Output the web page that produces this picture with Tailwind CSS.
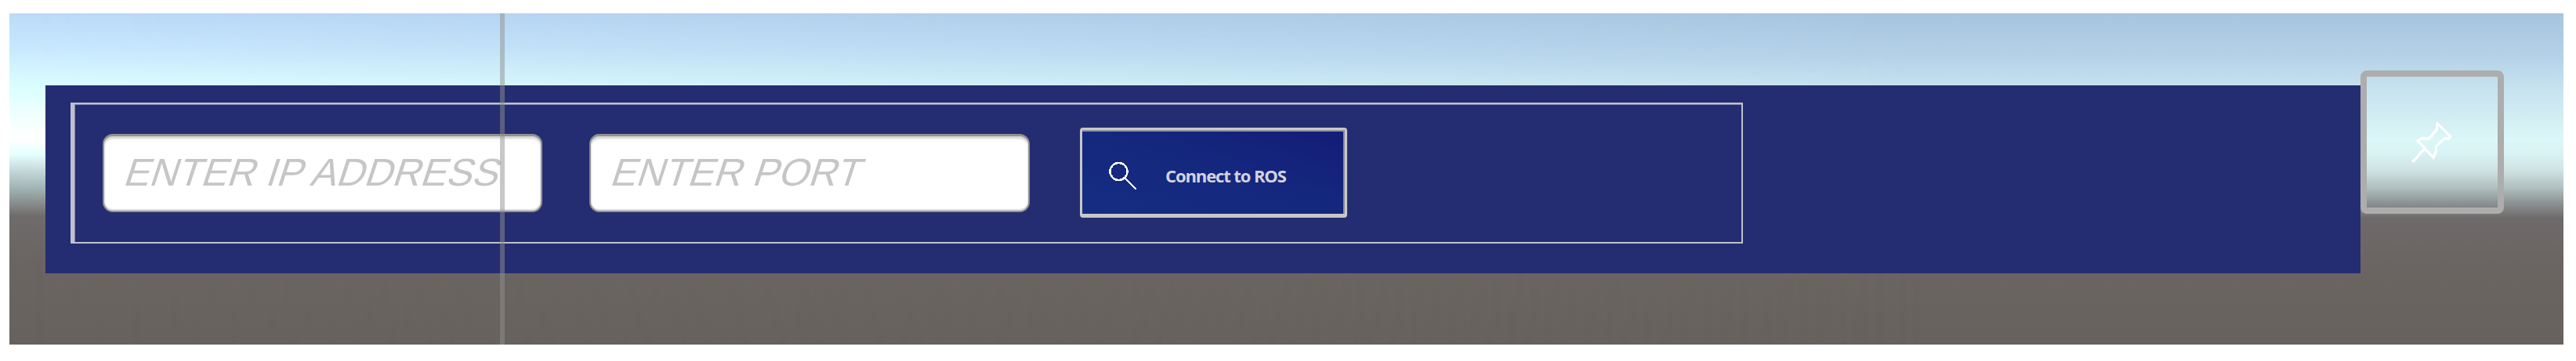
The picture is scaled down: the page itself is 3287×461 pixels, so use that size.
<!DOCTYPE html>
<html lang="en">
<head>
<meta charset="utf-8">
<title>Connect to ROS</title>
<script src="https://cdn.jsdelivr.net/npm/@tailwindcss/browser@4"></script>
</head>
<body class="bg-white w-[3287px] h-[461px] overflow-hidden pl-[12px] pt-[17px]">
<main class="relative isolate w-[3259px] h-[423px] pl-[46px] flex items-start bg-[linear-gradient(180deg,#a7c4df_0px,#b6d2e8_58px,#c5e1ef_92px,#d2ecf3_130px,#dcf7f8_161px,#d9f3f4_178px,#d0e3e3_200px,#b0bfbf_223px,#8b9090_243px,#6e6a6a_262px,#6a6562_320px,#67625d_423px)]">
  <div class="absolute inset-0 -z-10 bg-[linear-gradient(180deg,#badaf8_0px,#c8e8ff_45px,#d4f6ff_75px,#dbffff_96px,#f0ffff_130px,#ffffff_161px,#e5ffff_180px,#c5dadb_200px,#a0b0b0_225px,#858888_245px,#6f6b6b_259px,#6a6562_320px,#67625d_423px)] [mask-image:linear-gradient(90deg,#000_0%,transparent_75%)]"></div>

  <section class="mt-[92px] w-[2954px] h-[240px] bg-[#242d71] pl-[32px] pt-[22px]">
    <form class="w-[2134px] h-[180px] border-2 border-l-[5px] border-[#c0c1cf] shadow-[inset_1px_1px_0_#8086a9] pl-[36px] pt-[30px] flex items-start">
      <label class="mt-[8px] w-[561px] h-[100px] rounded-[13px] border-2 border-t-[3px] border-[#929292] bg-white shadow-[inset_0_3px_3px_#d2d2d2,inset_0_-2px_1px_#dedede] pl-[23px] pb-[4px] flex items-center">
        <span class="font-['Liberation_Sans',sans-serif] text-[49.5px] leading-none text-[#c6c6c6] whitespace-nowrap origin-[0_85%] -skew-x-[18deg]">ENTER IP ADDRESS</span>
      </label>
      <label class="mt-[8px] ml-[60px] w-[562px] h-[100px] rounded-[13px] border-2 border-t-[3px] border-[#929292] bg-white shadow-[inset_0_3px_3px_#d2d2d2,inset_0_-2px_1px_#dedede] pl-[23px] pb-[4px] flex items-center">
        <span class="font-['Liberation_Sans',sans-serif] text-[49.5px] leading-none text-[#c6c6c6] whitespace-nowrap origin-[0_85%] -skew-x-[18deg]">ENTER PORT</span>
      </label>
      <button type="button" class="ml-[64px] w-[341px] h-[115px] rounded-[4px] border-[3px] border-b-[5px] border-[#c8c8c8] shadow-[inset_-2px_2px_0_#9293a2] bg-[linear-gradient(18deg,#142d82,#14287e_50%,#141c78)] flex items-center">
        <svg class="ml-[33px] mt-[14px] w-[40px] h-[40px] shrink-0" viewBox="0 0 40 40" fill="none" stroke="#fff" stroke-width="2.5" shape-rendering="crispEdges"><circle cx="13.5" cy="12" r="11"/><path d="M21.500 20.500L36 35"/></svg>
        <span class="ml-[33px] pt-[8px] font-['Open_Sans',sans-serif] font-bold text-[22px] leading-none text-[#d2d3e2] whitespace-nowrap tracking-[-1.1px]">Connect to ROS</span>
      </button>
    </form>
  </section>

  <button type="button" aria-label="Pin" class="mt-[73px] w-[183px] h-[183px] rounded-[8px] border-[8px] border-[#adadad] flex items-center justify-center">
    <svg class="w-[54px] h-[58px]" viewBox="0 0 54 58" fill="none" stroke="#fff" stroke-width="3.500" shape-rendering="crispEdges"><path d="M33.500 5L49.500 21L47 24H41.500L31.500 34V40L28 48L8 27L12.500 24H22L32 13L33.500 3M16.500 37L1.500 54"/></svg>
  </button>

  <div class="absolute top-0 left-[626px] w-[6px] h-full bg-[#909090]/50"></div>
</main>
</body>
</html>
